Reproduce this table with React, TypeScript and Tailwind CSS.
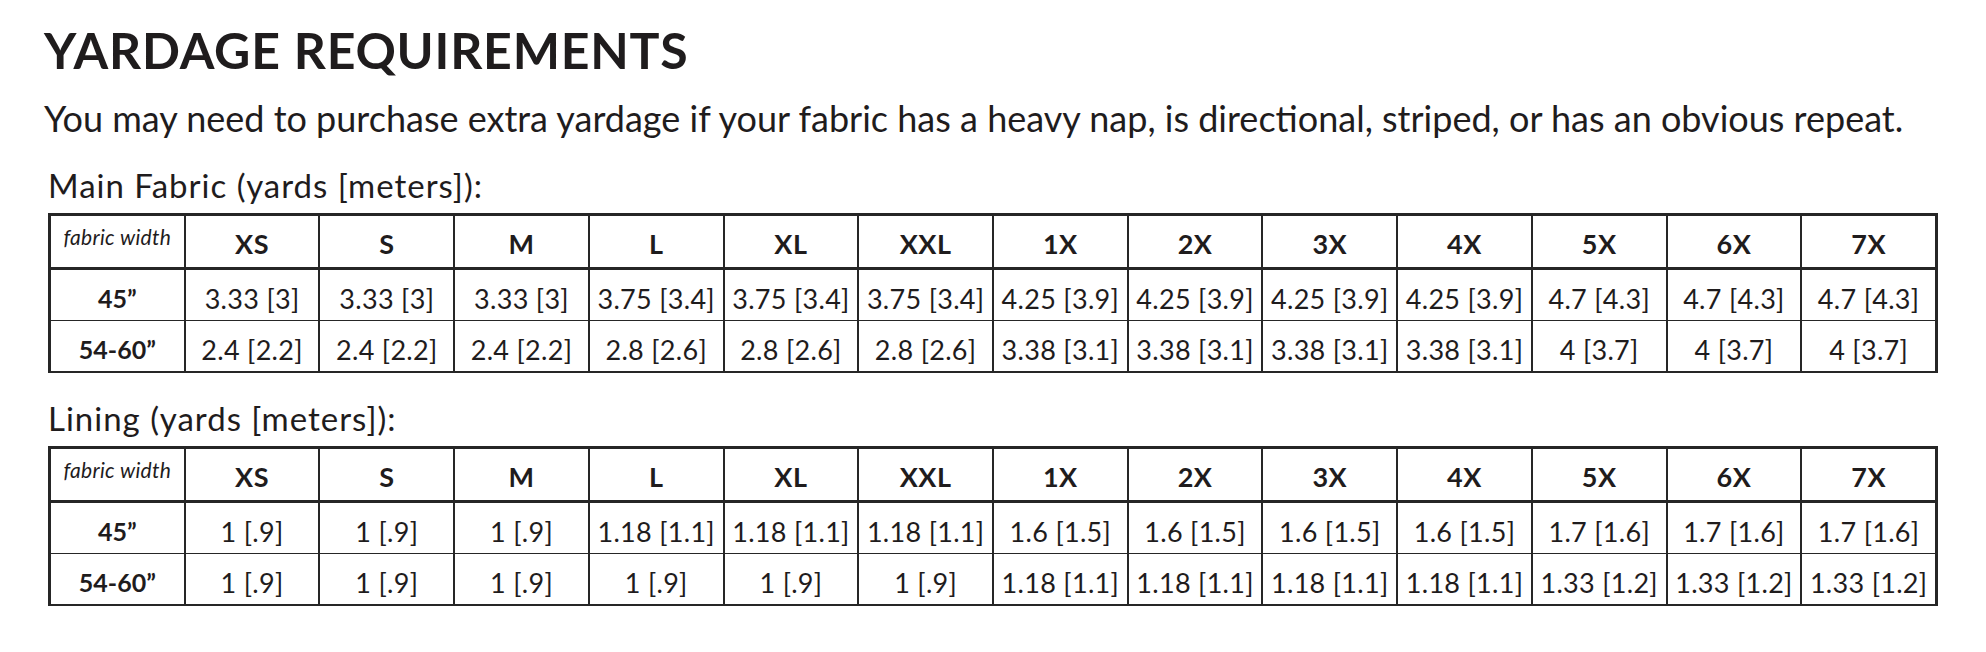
import React from "react";

const sizes = ["XS", "S", "M", "L", "XL", "XXL", "1X", "2X", "3X", "4X", "5X", "6X", "7X"];

type Row = { label: string; values: string[] };

const mainRows: Row[] = [
  {
    label: "45”",
    values: ["3.33 [3]", "3.33 [3]", "3.33 [3]", "3.75 [3.4]", "3.75 [3.4]", "3.75 [3.4]", "4.25 [3.9]", "4.25 [3.9]", "4.25 [3.9]", "4.25 [3.9]", "4.7 [4.3]", "4.7 [4.3]", "4.7 [4.3]"],
  },
  {
    label: "54-60”",
    values: ["2.4 [2.2]", "2.4 [2.2]", "2.4 [2.2]", "2.8 [2.6]", "2.8 [2.6]", "2.8 [2.6]", "3.38 [3.1]", "3.38 [3.1]", "3.38 [3.1]", "3.38 [3.1]", "4 [3.7]", "4 [3.7]", "4 [3.7]"],
  },
];

const liningRows: Row[] = [
  {
    label: "45”",
    values: ["1 [.9]", "1 [.9]", "1 [.9]", "1.18 [1.1]", "1.18 [1.1]", "1.18 [1.1]", "1.6 [1.5]", "1.6 [1.5]", "1.6 [1.5]", "1.6 [1.5]", "1.7 [1.6]", "1.7 [1.6]", "1.7 [1.6]"],
  },
  {
    label: "54-60”",
    values: ["1 [.9]", "1 [.9]", "1 [.9]", "1 [.9]", "1 [.9]", "1 [.9]", "1.18 [1.1]", "1.18 [1.1]", "1.18 [1.1]", "1.18 [1.1]", "1.33 [1.2]", "1.33 [1.2]", "1.33 [1.2]"],
  },
];

function YardageTable({ rows }: { rows: Row[] }) {
  return (
    <div className="w-[1890px] border-[3px] border-[#262626] bg-[#262626] flex flex-col">
      <div className="grid grid-cols-[repeat(14,minmax(0,1fr))] gap-x-[2px] h-[51px]">
        <div className="bg-white flex items-center justify-center pb-[9px] italic text-[21px] tracking-[0.3px] text-[#1f1c1d]">
          fabric width
        </div>
        {sizes.map((s) => (
          <div key={s} className="bg-white flex items-center justify-center pt-[5px] font-bold text-[27px] tracking-[0.5px] text-[#1f1c1d]">
            {s}
          </div>
        ))}
      </div>
      {rows.map((r, i) => (
        <div
          key={r.label}
          className={
            i === 0
              ? "mt-[3px] grid grid-cols-[repeat(14,minmax(0,1fr))] gap-x-[2px] h-[49px]"
              : "mt-[2px] grid grid-cols-[repeat(14,minmax(0,1fr))] gap-x-[2px] h-[49px]"
          }
        >
          <div className="bg-white flex items-center justify-center pt-[8px] font-bold text-[25px] text-[#1f1c1d]">
            {r.label}
          </div>
          {r.values.map((v, j) => (
            <div key={j} className="bg-white flex items-center justify-center pt-[9px] text-[27px] tracking-[0.3px] text-[#1f1c1d] whitespace-nowrap">
              {v}
            </div>
          ))}
        </div>
      ))}
    </div>
  );
}

export default function App() {
  return (
    <div className="w-[1986px] h-[652px] bg-white font-['Lato',sans-serif] text-[#1f1c1d] pl-[44px] pt-[21px]">
      <h1 className="text-[50px] leading-[58px] font-bold tracking-[0.8px]">YARDAGE REQUIREMENTS</h1>
      <p className="mt-[18px] text-[36px] leading-[42px]">
        You may need to purchase extra yardage if your fabric has a heavy nap, is directional, striped, or has an obvious repeat.
      </p>
      <p className="mt-[27px] pl-[4px] text-[33px] leading-[38px] tracking-[1px]">Main Fabric (yards [meters]):</p>
      <div className="mt-[9px] pl-[4px]">
        <YardageTable rows={mainRows} />
      </div>
      <p className="mt-[26px] pl-[4px] text-[33px] leading-[38px] tracking-[1px]">Lining (yards [meters]):</p>
      <div className="mt-[9px] pl-[4px]">
        <YardageTable rows={liningRows} />
      </div>
    </div>
  );
}
